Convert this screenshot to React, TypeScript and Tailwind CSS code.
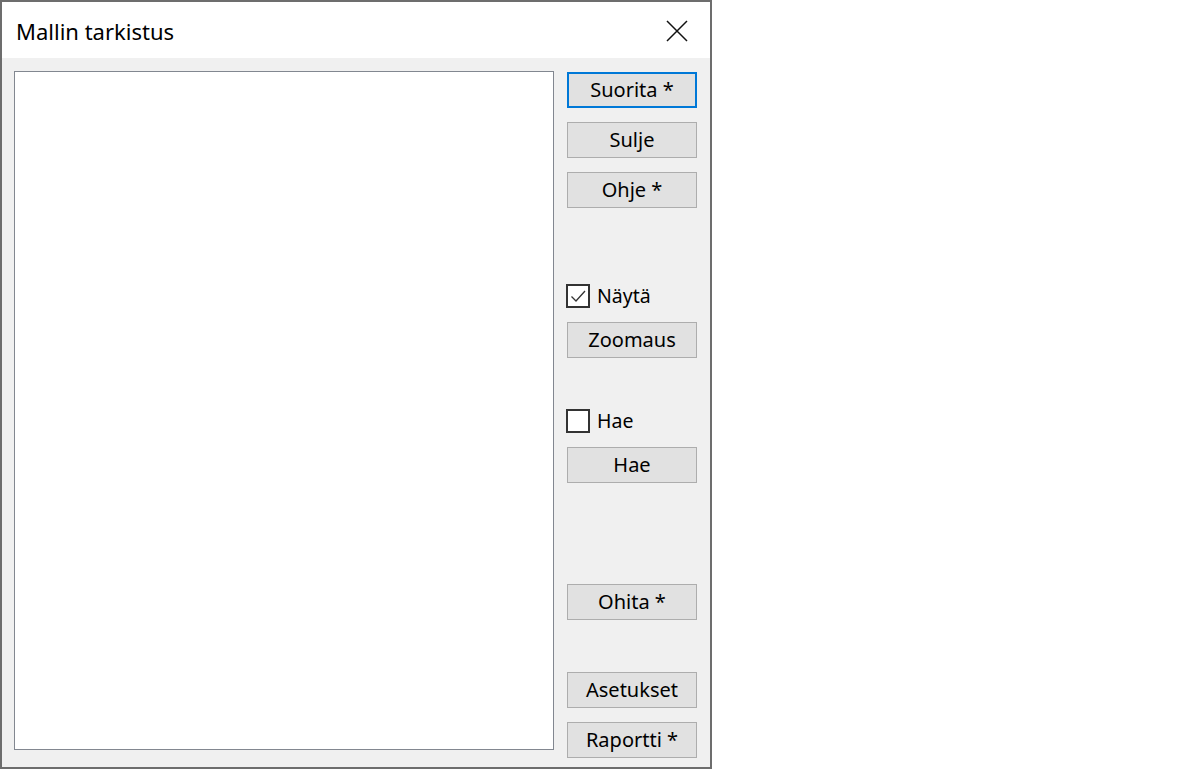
import React from "react";

const font = { fontFamily: '"Noto Sans", "Open Sans", "Liberation Sans", sans-serif' };

function Btn({ label, primary }: { label: string; primary?: boolean }) {
  return (
    <div
      className={
        "w-[130px] h-[36px] flex items-center justify-center bg-[#e1e1e1] text-[20px] leading-none text-black " +
        (primary ? "border-2 border-[#0078d7]" : "border border-[#adadad]")
      }
    >
      {label}
    </div>
  );
}

function Check({ label, checked }: { label: string; checked?: boolean }) {
  return (
    <div className="flex items-center h-[24px] ml-[-1px]">
      <div className="w-[24px] h-[24px] border-2 border-[#333333] bg-white flex items-center justify-center">
        {checked && (
          <svg width="18" height="18" viewBox="0 0 18 18">
            <path d="M2.5 9.5 L7 14 L16 4" fill="none" stroke="#333" strokeWidth="1.3" />
          </svg>
        )}
      </div>
      <span className="ml-[7px] text-[19.5px] leading-none text-black">{label}</span>
    </div>
  );
}

export default function App() {
  return (
    <div className="w-[1200px] h-[769px] bg-white" style={font}>
      <div className="w-[712px] h-[769px] border-2 border-[#6d6d6d] flex flex-col bg-[#f0f0f0]">
        <div className="h-[56px] bg-white flex items-center justify-between pl-[14px] pr-[22px] shrink-0">
          <span className="text-[22px] leading-none text-black mt-[1px]">Mallin tarkistus</span>
          <svg width="22" height="22" viewBox="0 0 22 22" className="mt-[2px]">
            <path d="M1 1 L21 21 M21 1 L1 21" stroke="#111" strokeWidth="1.5" />
          </svg>
        </div>
        <div className="flex flex-1 pt-[13px] pl-[12px] pb-[16px]">
          <div className="w-[540px] h-[679px] bg-white border border-[#828790]" />
          <div className="flex flex-col ml-[13px] mt-[1px]">
            <Btn label="Suorita *" primary />
            <div className="h-[14px]" />
            <Btn label="Sulje" />
            <div className="h-[14px]" />
            <Btn label="Ohje *" />
            <div className="h-[76px]" />
            <Check label="Näytä" checked />
            <div className="h-[14px]" />
            <Btn label="Zoomaus" />
            <div className="h-[51px]" />
            <Check label="Hae" />
            <div className="h-[14px]" />
            <Btn label="Hae" />
            <div className="h-[101px]" />
            <Btn label="Ohita *" />
            <div className="h-[52px]" />
            <Btn label="Asetukset" />
            <div className="h-[14px]" />
            <Btn label="Raportti *" />
          </div>
        </div>
      </div>
    </div>
  );
}
